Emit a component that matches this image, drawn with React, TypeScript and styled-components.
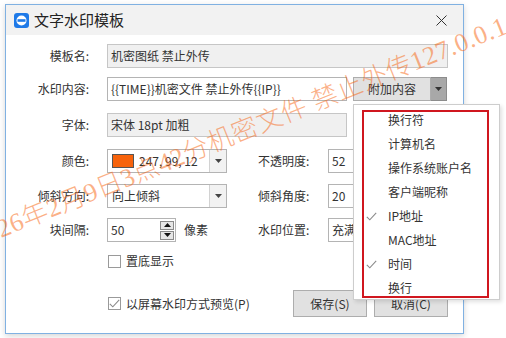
import React from 'react'
import styled, { createGlobalStyle } from 'styled-components'

const GlobalStyle = createGlobalStyle`
  html, body {
    margin: 0;
    padding: 0;
    background: #fff;
  }
  body {
    font-family: "Noto Sans CJK SC", "Liberation Sans", sans-serif;
    font-size: 12px;
    color: #333;
  }
`

const Screen = styled.div`
  position: relative;
  width: 506px;
  height: 338px;
  overflow: hidden;
  box-sizing: border-box;
  padding: 4px 0 0 5px;
  background: #fff;
`

const Window = styled.div`
  width: 459px;
  height: 330px;
  box-sizing: border-box;
  border: 1px solid #80b1e2;
  box-shadow: 0 2px 6px rgba(0, 0, 0, 0.16);
  background: #fff;
  display: flex;
  flex-direction: column;
`

const TitleBar = styled.div`
  height: 30px;
  background: #f2f2f2;
  display: flex;
  align-items: center;
  padding-left: 8px;
  flex-shrink: 0;
`

const Title = styled.span`
  margin-left: 5px;
  font-size: 15px;
  line-height: 20px;
  color: #222;
`

const CloseButton = styled.div`
  margin-left: auto;
  margin-right: 16px;
  width: 11px;
  height: 11px;
  display: flex;
`

const Body = styled.div`
  display: flex;
  flex-direction: column;
  padding: 0 15px 0 0;
`

const Row = styled.div<{ $gap: number; $height?: number }>`
  display: flex;
  align-items: center;
  margin-top: ${p => p.$gap}px;
  height: ${p => p.$height ?? 24}px;
`

const Label = styled.div`
  width: 83px;
  margin-right: 18px;
  text-align: right;
  flex-shrink: 0;
  line-height: 16px;
  white-space: nowrap;
`

const SideLabel = styled.div`
  width: 70px;
  margin-left: 31px;
  flex-shrink: 0;
  line-height: 16px;
  white-space: nowrap;
`

const LeftCell = styled.div`
  width: 120px;
  display: flex;
  align-items: center;
  flex-shrink: 0;
`

const Field = styled.div<{ $width?: number; $readonly?: boolean }>`
  box-sizing: border-box;
  height: 24px;
  ${p => (p.$width ? `width: ${p.$width}px; flex-shrink: 0;` : 'flex: 1;')}
  border: 1px solid ${p => (p.$readonly ? '#c6c6c6' : '#b4b4b4')};
  background: ${p => (p.$readonly ? '#f0f0f0' : '#fff')};
  display: flex;
  align-items: center;
  padding: 0 3px;
  white-space: nowrap;
  overflow: hidden;
  line-height: 16px;
`

const Combo = styled(Field)`
  padding: 0 0 0 4px;
`

const ComboText = styled.span`
  flex: 1;
  line-height: 16px;
`

const ComboArrow = styled.div`
  width: 16px;
  height: 100%;
  border-left: 1px solid #d2d2d2;
  background: #f2f2f2;
  display: flex;
  align-items: center;
  justify-content: center;
`

const Swatch = styled.div<{ $color: string }>`
  width: 20px;
  height: 12px;
  background: ${p => p.$color};
  border: 1px solid #555;
  margin-right: 5px;
  flex-shrink: 0;
`

const ButtonGroup = styled.div`
  position: relative;
  margin-left: 6px;
  width: 94px;
  height: 24px;
  display: flex;
  flex-shrink: 0;
`

const SplitMain = styled.div`
  flex: 1;
  box-sizing: border-box;
  border: 1px solid #adadad;
  background: #e1e1e1;
  display: flex;
  align-items: center;
  justify-content: center;
  line-height: 16px;
`

const SplitArrow = styled.div`
  width: 16px;
  box-sizing: border-box;
  border: 1px solid #8c8c8c;
  border-left: none;
  background: #a8a8a8;
  display: flex;
  align-items: center;
  justify-content: center;
`

const Menu = styled.div`
  position: absolute;
  top: 27px;
  left: 0;
  width: 147px;
  height: 196px;
  box-sizing: border-box;
  border: 1px solid #cdcdcd;
  background: #fff;
  box-shadow: 2px 2px 4px rgba(0, 0, 0, 0.12);
  padding-top: 3px;
  z-index: 5;
`

const MenuItem = styled.div`
  position: relative;
  height: 24px;
  display: flex;
  align-items: center;
  padding-left: 34px;
  line-height: 16px;
  white-space: nowrap;
`

const MenuCheck = styled.div`
  position: absolute;
  left: 12px;
  top: 8px;
  display: flex;
`

const Highlight = styled.div`
  position: absolute;
  left: 8px;
  top: 5px;
  width: 127px;
  height: 188px;
  box-sizing: border-box;
  border: 2px solid #d0171f;
  pointer-events: none;
`

const Spinner = styled(Field)`
  padding: 0 1px 0 3px;
`

const SpinValue = styled.span`
  flex: 1;
`

const SpinButtons = styled.div`
  width: 14px;
  display: flex;
  flex-direction: column;
  gap: 1px;
`

const SpinButton = styled.div`
  height: 9px;
  box-sizing: border-box;
  border: 1px solid #8a8a8a;
  background: #e6e6e6;
  display: flex;
  align-items: center;
  justify-content: center;
`

const Unit = styled.span`
  margin-left: 8px;
  line-height: 16px;
`

const Indent = styled.div`
  width: 102px;
  flex-shrink: 0;
`

const CheckBox = styled.div`
  width: 13px;
  height: 13px;
  box-sizing: border-box;
  border: 1px solid #9a9a9a;
  background: #fff;
  display: flex;
  align-items: center;
  justify-content: center;
  flex-shrink: 0;
`

const CheckLabel = styled.span`
  margin-left: 5px;
  line-height: 16px;
  white-space: nowrap;
`

const Buttons = styled.div`
  margin-left: auto;
  display: flex;
  gap: 7px;
`

const Button = styled.div`
  width: 74px;
  height: 27px;
  box-sizing: border-box;
  border: 1px solid #adadad;
  background: #e1e1e1;
  display: flex;
  align-items: center;
  justify-content: center;
  line-height: 16px;
`

// screen watermark preview, drawn over the whole screen
const Watermark = styled.div`
  position: absolute;
  left: -24px;
  top: 227px;
  transform-origin: 0 21px;
  transform: rotate(-22deg);
  font-family: "Liberation Serif", "Noto Sans CJK SC", serif;
  font-size: 26px;
  font-weight: 300;
  line-height: 26px;
  letter-spacing: 0.5px;
  color: rgba(247, 99, 12, 0.5);
  white-space: pre;
  pointer-events: none;
  z-index: 10;
`

const AppIcon = () => (
  <svg width="15" height="15" viewBox="0 0 15 15">
    <rect x="0" y="0" width="15" height="15" rx="3" fill="#1f7ae8" />
    <circle cx="7.5" cy="7.5" r="5" fill="#fff" />
    <rect x="3.5" y="6.2" width="8" height="2.6" fill="#1f7ae8" />
  </svg>
)

const CloseIcon = () => (
  <svg width="11" height="11" viewBox="0 0 11 11">
    <path d="M0.5 0.5 L10.5 10.5 M10.5 0.5 L0.5 10.5" stroke="#333" strokeWidth="1" />
  </svg>
)

const DownTriangle = ({ color = '#444' }: { color?: string }) => (
  <svg width="7" height="4" viewBox="0 0 7 4">
    <path d="M0 0 H7 L3.5 4 Z" fill={color} />
  </svg>
)

const UpTriangle = () => (
  <svg width="7" height="4" viewBox="0 0 7 4">
    <path d="M0 4 H7 L3.5 0 Z" fill="#111" />
  </svg>
)

const Tick = () => (
  <svg width="11" height="9" viewBox="0 0 11 9">
    <path d="M0.8 4.8 L3.8 7.8 L10.2 0.8" stroke="#8a8a8a" strokeWidth="1.1" fill="none" />
  </svg>
)

const menuItems = [
  { text: '换行符', checked: false },
  { text: '计算机名', checked: false },
  { text: '操作系统账户名', checked: false },
  { text: '客户端昵称', checked: false },
  { text: 'IP地址', checked: true },
  { text: 'MAC地址', checked: false },
  { text: '时间', checked: true },
  { text: '换行', checked: false },
]

const App = () => {
  return (
    <>
      <GlobalStyle />
      <Screen>
        <Window>
          <TitleBar>
            <AppIcon />
            <Title>文字水印模板</Title>
            <CloseButton>
              <CloseIcon />
            </CloseButton>
          </TitleBar>
          <Body>
            <Row $gap={9}>
              <Label>模板名:</Label>
              <Field $readonly>机密图纸 禁止外传</Field>
            </Row>
            <Row $gap={9}>
              <Label>水印内容:</Label>
              <Field $width={240}>{'{{TIME}}机密文件 禁止外传{{IP}}'}</Field>
              <ButtonGroup>
                <SplitMain>附加内容</SplitMain>
                <SplitArrow>
                  <DownTriangle color="#333" />
                </SplitArrow>
                <Menu>
                  {menuItems.map(item => (
                    <MenuItem key={item.text}>
                      {item.checked && (
                        <MenuCheck>
                          <Tick />
                        </MenuCheck>
                      )}
                      {item.text}
                    </MenuItem>
                  ))}
                  <Highlight />
                </Menu>
              </ButtonGroup>
            </Row>
            <Row $gap={12}>
              <Label>字体:</Label>
              <Field $width={240} $readonly>宋体 18pt 加粗</Field>
            </Row>
            <Row $gap={12}>
              <Label>颜色:</Label>
              <LeftCell>
                <Combo $width={120}>
                  <Swatch $color="#f7630c" />
                  <ComboText>247, 99, 12</ComboText>
                  <ComboArrow>
                    <DownTriangle />
                  </ComboArrow>
                </Combo>
              </LeftCell>
              <SideLabel>不透明度:</SideLabel>
              <Field>52</Field>
            </Row>
            <Row $gap={11}>
              <Label>倾斜方向:</Label>
              <LeftCell>
                <Combo $width={120}>
                  <ComboText>向上倾斜</ComboText>
                  <ComboArrow>
                    <DownTriangle />
                  </ComboArrow>
                </Combo>
              </LeftCell>
              <SideLabel>倾斜角度:</SideLabel>
              <Field>20</Field>
            </Row>
            <Row $gap={10}>
              <Label>块间隔:</Label>
              <LeftCell>
                <Spinner $width={69}>
                  <SpinValue>50</SpinValue>
                  <SpinButtons>
                    <SpinButton>
                      <UpTriangle />
                    </SpinButton>
                    <SpinButton>
                      <DownTriangle color="#111" />
                    </SpinButton>
                  </SpinButtons>
                </Spinner>
                <Unit>像素</Unit>
              </LeftCell>
              <SideLabel>水印位置:</SideLabel>
              <Field>充满屏幕</Field>
            </Row>
            <Row $gap={7}>
              <Indent />
              <CheckBox />
              <CheckLabel>置底显示</CheckLabel>
            </Row>
            <Row $gap={17} $height={27}>
              <Indent />
              <CheckBox>
                <Tick />
              </CheckBox>
              <CheckLabel>以屏幕水印方式预览(P)</CheckLabel>
              <Buttons>
                <Button>保存(S)</Button>
                <Button>取消(C)</Button>
              </Buttons>
            </Row>
          </Body>
        </Window>
        <Watermark>2026年2月9日3点42分机密文件 禁止外传127.0.0.1</Watermark>
      </Screen>
    </>
  )
}

export default App
